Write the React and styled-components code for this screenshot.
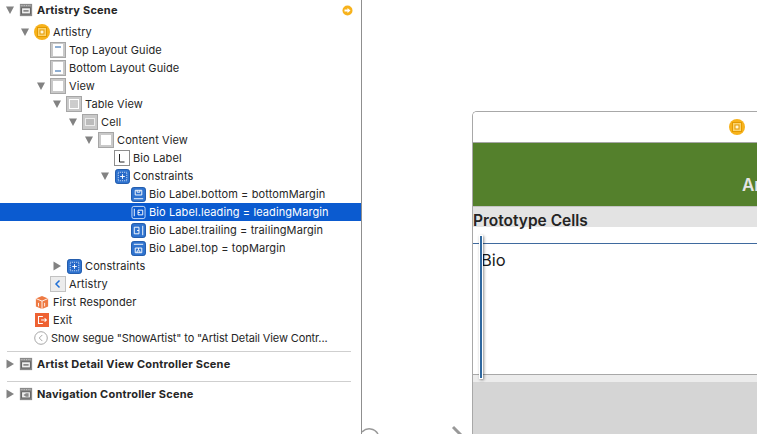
import React from 'react';
import styled, { createGlobalStyle } from 'styled-components';

const GlobalStyle = createGlobalStyle`
  html, body { margin: 0; padding: 0; background: #ffffff; overflow: hidden; }
  body { font-family: "Inter", "Liberation Sans", Arial, sans-serif; }
`;

const Page = styled.div`
  display: flex;
  width: 757px;
  height: 434px;
  overflow: hidden;
`;

// Document outline on the left
const Outline = styled.div`
  flex: none;
  width: 362px;
  padding-top: 1px;
  box-sizing: border-box;
  border-right: 1px solid #8f8f8f;
`;

const Tree = styled.div`
  padding-top: 4px;
`;

const Row = styled.div`
  display: flex;
  align-items: center;
  height: 18px;
  padding-left: ${(p) => p.$indent}px;
  background: ${(p) => (p.$selected ? '#0b5bd0' : 'transparent')};
  color: ${(p) => (p.$selected ? '#ffffff' : '#262626')};
`;

const Disclosure = styled.svg`
  width: 8px;
  height: 10px;
  flex: none;
  margin-right: ${(p) => p.$gap}px;
`;

const Label = styled.span`
  font-size: 11px;
  letter-spacing: ${(p) => (p.$tight ? '-0.12px' : '0.1px')};
  margin-left: ${(p) => p.$gap}px;
  white-space: nowrap;
  font-weight: 400;
`;

const SceneLabel = styled(Label)`
  font-weight: 700;
  letter-spacing: 0.22px;
  margin-left: 4px;
  color: #262626;
`;

const Spacer = styled.div`
  flex: 1;
`;

const Separator = styled.div`
  height: 1px;
  margin: ${(p) => p.$top}px 10px 3px 7px;
  background: #cfcfcf;
`;

const ExitArrow = styled.svg`
  width: 11px;
  height: 11px;
  flex: none;
  margin-right: 8px;
`;

// Storyboard canvas on the right
const Canvas = styled.div`
  position: relative;
  flex: 1;
  min-width: 0;
  padding: 111px 0 0 110px;
`;

const Scene = styled.div`
  height: 400px;
  box-sizing: border-box;
  border: 1px solid #a8a8a8;
  border-right: 0;
  border-top-left-radius: 5px;
  overflow: hidden;
`;

const SceneDock = styled.div`
  display: flex;
  align-items: center;
  height: 30px;
  padding-left: 256px;
  background: #ffffff;
  border-bottom: 1px solid #a6a6a6;
`;

const NavBar = styled.div`
  display: flex;
  align-items: flex-end;
  height: 64px;
  box-sizing: border-box;
  padding: 0 0 11px 269px;
  background: #54802c;
  color: #e6e6e6;
  font-size: 17px;
  font-weight: 600;
  white-space: nowrap;
  border-bottom: 1px solid #c4c4c4;
`;

const SectionHeader = styled.div`
  height: 20px;
  background: #e3e3e3;
  color: #242424;
  font-size: 15.5px;
  font-weight: 600;
  line-height: 27px;
`;

const TableGap = styled.div`
  height: 16px;
  background: #ffffff;
  border-bottom: 1px solid #3f6a9e;
`;

const Cell = styled.div`
  height: 131px;
  box-sizing: border-box;
  padding: 6px 0 0 8px;
  font-size: 16.5px;
  color: #1c1c1c;
  background: #ffffff;
  border-bottom: 1px solid #a8a8a8;
`;

const FooterBand = styled.div`
  height: 7px;
  background: #ececec;
`;

const EmptyTable = styled.div`
  height: 60px;
  background: #d5d5d5;
`;

// Constraint handle lying over the prototype cell
const ConstraintBar = styled.div`
  position: absolute;
  left: 117px;
  top: 235px;
  width: 2px;
  height: 142px;
  background: #2f689f;
  border: 1px solid #ffffff;
  box-shadow: 1px 1px 3px rgba(0, 0, 0, 0.45);
`;

const SegueArrow = styled.svg`
  position: absolute;
  left: 0;
  top: 424px;
  width: 110px;
  height: 10px;
`;

const grey = { fill: '#c9c9c9', stroke: '#a6a6a6' };
const blue = { fill: '#2f73cf', stroke: '#1a55a8' };

const sceneFrame = (
  <>
    <rect x="1" y="1" width="14" height="14" fill="#8a8a8a" />
    <path d="M2 3h12" stroke="#d8d8d8" strokeDasharray="1 1" />
    <rect x="3" y="5.500" width="10" height="7" fill="#efefef" stroke="#555" />
  </>
);

const Glyphs = {
  scene: (
    <>
      {sceneFrame}
      <path d="M5 8h6v2H5z" fill="#8a8a8a" />
    </>
  ),
  navscene: (
    <>
      {sceneFrame}
      <path d="M5 9l3-2h3v4H8z" fill="#8a8a8a" />
    </>
  ),
  controller: (
    <>
      <circle cx="8" cy="8" r="8" fill="#f7b21b" />
      <rect x="3.500" y="3.500" width="9" height="9" fill="#fbd36e" stroke="#e39a00" />
      <rect x="6" y="6" width="4" height="4" fill="#fff6d8" stroke="#e39a00" />
    </>
  ),
  top: (
    <>
      <rect x="0.500" y="0.500" width="15" height="15" {...grey} />
      <rect x="3" y="2" width="10" height="12" fill="#fff" />
      <path d="M5 5h6" stroke="#1d5fa8" />
    </>
  ),
  bottom: (
    <>
      <rect x="0.500" y="0.500" width="15" height="15" {...grey} />
      <rect x="3" y="2" width="10" height="12" fill="#fff" />
      <path d="M5 11h6" stroke="#1d5fa8" />
    </>
  ),
  view: (
    <>
      <rect x="0.500" y="0.500" width="15" height="15" {...grey} />
      <rect x="3" y="3" width="10" height="10" fill="#fff" />
    </>
  ),
  table: (
    <>
      <rect x="0.500" y="0.500" width="15" height="15" {...grey} />
      <rect x="3" y="3" width="10" height="10" fill="#fff" />
      <path d="M4 5h8M4 7h8M4 9h8M4 11h8" stroke="#9a9a9a" />
    </>
  ),
  cell: (
    <>
      <rect x="0.500" y="0.500" width="15" height="15" {...grey} />
      <rect x="3" y="4" width="10" height="8" fill="#ececec" />
      <path d="M4 6h8M4 8h8M4 10h8" stroke="#8a8a8a" />
    </>
  ),
  label: (
    <>
      <rect x="0.500" y="0.500" width="15" height="15" fill="#fff" stroke="#8e8e8e" />
      <path d="M5.500 4v8h5" fill="none" stroke="#222" />
    </>
  ),
  constraints: (
    <>
      <rect x="0.500" y="0.500" width="15" height="15" rx="2.500" {...blue} />
      <rect x="3.500" y="3.500" width="9" height="9" fill="#2568c8" stroke="#d6e4f8" strokeDasharray="1 1" />
      <path d="M8 5.500v5M5.500 8h5" stroke="#fff" />
    </>
  ),
  pinBottom: (
    <>
      <rect x="0.500" y="0.500" width="15" height="15" rx="2.500" {...blue} />
      <path d="M4.500 3.500h7v5h-7zM6.500 3.500v2h3v-2M3 12.500h10" fill="none" stroke="#fff" />
    </>
  ),
  pinLeading: (
    <>
      <rect x="1" y="1.500" width="14" height="13" rx="2" fill="#0b5bd0" stroke="#cfe0f7" />
      <path d="M3.500 4v8M7.500 5.500h5v5h-5zM7.500 8h2" fill="none" stroke="#fff" />
    </>
  ),
  pinTrailing: (
    <>
      <rect x="0.500" y="0.500" width="15" height="15" rx="2.500" {...blue} />
      <path d="M12.500 3v10M3.500 4.500h5v7h-5zM8.500 8h-2" fill="none" stroke="#fff" />
    </>
  ),
  pinTop: (
    <>
      <rect x="0.500" y="0.500" width="15" height="15" rx="2.500" {...blue} />
      <path d="M3 3.500h10M4.500 7.500h7v5h-7zM8 7.500v2M6.500 12.500v-2h3v2" fill="none" stroke="#fff" />
    </>
  ),
  back: (
    <>
      <rect x="0.500" y="0.500" width="15" height="15" fill="#ececec" stroke="#c2c2c2" />
      <path d="M9.500 4.500L6 8l3.500 3.500" fill="none" stroke="#1f6fd6" strokeWidth="1.5" />
    </>
  ),
  responder: (
    <>
      <path d="M1 4l7-3 7 3v9l-7 3-7-3z" fill="#ee7a43" />
      <path d="M1 4l7 3 7-3M8 7v9" fill="none" stroke="#fff" />
      <path d="M4 9v4M11 9v4" stroke="#fff" />
    </>
  ),
  exit: (
    <>
      <rect width="16" height="16" fill="#ee6233" />
      <path d="M9 4H4v8h5M7 8h6M11 6l2 2-2 2" fill="none" stroke="#fff" strokeWidth="1.2" />
    </>
  ),
  segue: (
    <>
      <circle cx="8" cy="8" r="7.200" fill="#fff" stroke="#9a9a9a" />
      <path d="M9.500 4.500L6 8l3.500 3.500" fill="none" stroke="#9a9a9a" />
    </>
  ),
};

const IconBox = styled.svg`
  width: ${(p) => p.$size}px;
  height: ${(p) => p.$size}px;
  flex: none;
`;

const Icon = ({ kind, size = 16 }) => (
  <IconBox viewBox="0 0 16 16" $size={size}>
    {Glyphs[kind]}
  </IconBox>
);

const Triangle = ({ open, gap = 5 }) => (
  <Disclosure viewBox="0 0 8 10" $gap={gap}>
    <path d={open ? 'M0 1.500h8L4 9z' : 'M0.500 0.500L8 5 0.500 9.500z'} fill="#828282" />
  </Disclosure>
);

// x is where the row's first item starts, a triangle sits in front of the icon
const nodes = [
  { text: 'Artistry', kind: 'controller', x: 21, open: true },
  { text: 'Top Layout Guide', kind: 'top', x: 50 },
  { text: 'Bottom Layout Guide', kind: 'bottom', x: 50 },
  { text: 'View', kind: 'view', x: 37, open: true },
  { text: 'Table View', kind: 'table', x: 53, open: true },
  { text: 'Cell', kind: 'cell', x: 69, open: true },
  { text: 'Content View', kind: 'view', x: 85, open: true },
  { text: 'Bio Label', kind: 'label', x: 114 },
  { text: 'Constraints', kind: 'constraints', x: 101, open: true, gap: 6, size: 15 },
  { text: 'Bio Label.bottom = bottomMargin', kind: 'pinBottom', x: 131, size: 15 },
  { text: 'Bio Label.leading = leadingMargin', kind: 'pinLeading', x: 131, size: 15, selected: true },
  { text: 'Bio Label.trailing = trailingMargin', kind: 'pinTrailing', x: 131, size: 15 },
  { text: 'Bio Label.top = topMargin', kind: 'pinTop', x: 131, size: 15 },
  { text: 'Constraints', kind: 'constraints', x: 53, open: false, gap: 6, size: 15 },
  { text: 'Artistry', kind: 'back', x: 50 },
  { text: 'First Responder', kind: 'responder', x: 35, size: 14, labelGap: 4 },
  { text: 'Exit', kind: 'exit', x: 35, size: 14, labelGap: 4 },
  { text: 'Show segue "ShowArtist" to "Artist Detail View Contr...', kind: 'segue', x: 34, size: 14, tight: true },
];

const SceneRow = ({ open, kind, children, action }) => (
  <Row $indent={6}>
    <Triangle open={open} />
    <Icon kind={kind} size={14} />
    <SceneLabel>{children}</SceneLabel>
    {action && <Spacer />}
    {action}
  </Row>
);

export default function App() {
  return (
    <Page>
      <GlobalStyle />
      <Outline>
        <SceneRow
          open
          kind="scene"
          action={
            <ExitArrow viewBox="0 0 11 11">
              <circle cx="5.500" cy="5.500" r="5" fill="#f7b21b" />
              <path d="M2.500 4.500h3V3l3 2.500-3 2.500V6.500h-3z" fill="#fff" />
            </ExitArrow>
          }
        >
          Artistry Scene
        </SceneRow>
        <Tree>
          {nodes.map((n) => (
            <Row key={n.text + n.x} $indent={n.x} $selected={n.selected}>
              {n.open !== undefined && <Triangle open={n.open} gap={n.gap} />}
              <Icon kind={n.kind} size={n.size} />
              <Label $gap={n.labelGap ?? 3} $tight={n.tight}>{n.text}</Label>
            </Row>
          ))}
        </Tree>
        <Separator $top={4} />
        <SceneRow kind="scene">Artist Detail View Controller Scene</SceneRow>
        <Separator $top={8} />
        <SceneRow kind="navscene">Navigation Controller Scene</SceneRow>
      </Outline>
      <Canvas>
        <SegueArrow viewBox="0 0 110 10">
          <path d="M0 8a10 10 0 0 1 16 2" fill="none" stroke="#999" strokeWidth="1.5" />
          <path d="M91 3l8 8" fill="none" stroke="#999" strokeWidth="3" />
        </SegueArrow>
        <Scene>
          <SceneDock>
            <Icon kind="controller" />
          </SceneDock>
          <NavBar>Artistry</NavBar>
          <SectionHeader>Prototype Cells</SectionHeader>
          <TableGap />
          <Cell>Bio</Cell>
          <FooterBand />
          <EmptyTable />
        </Scene>
        <ConstraintBar />
      </Canvas>
    </Page>
  );
}
